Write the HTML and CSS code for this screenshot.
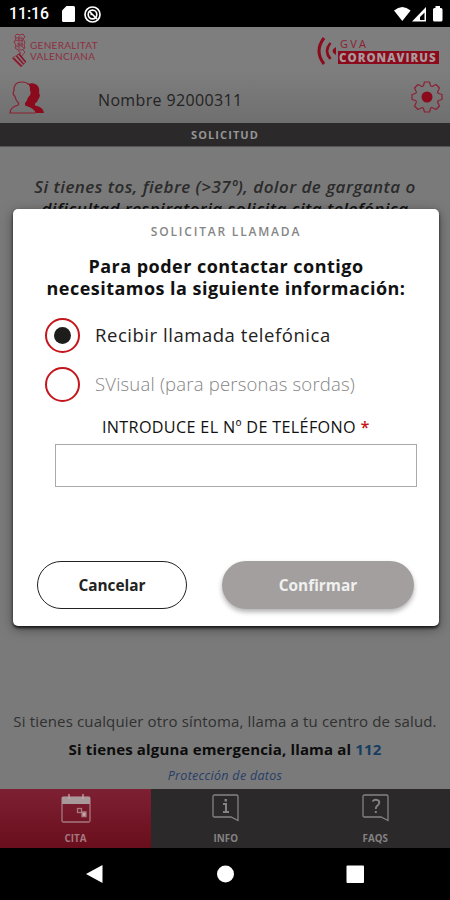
FILE: index.html
```html
<!DOCTYPE html>
<html lang="es">
<head>
    <meta charset="UTF-8">
    <meta name="viewport" content="width=device-width, initial-scale=1.0">
    <title>GVA Coronavirus</title>
    <link rel="stylesheet" href="styles.css">
</head>
<body>
    <div class="phone">
        <div class="status-bar">
            <span class="clock">11:16</span>
            <svg class="sd-card" width="13" height="16" viewBox="0 0 13 16" fill="white">
                <path d="M4.5 0H11.5Q13 0 13 1.5V14.5Q13 16 11.5 16H1.5Q0 16 0 14.5V4.5Z"/>
            </svg>
            <svg class="sync" width="17" height="17" viewBox="0 0 17 17" fill="none" stroke="white">
                <circle cx="8.5" cy="8.5" r="7.5" stroke-width="1.7"/>
                <circle cx="8.5" cy="8.5" r="4.3" stroke-width="1.7"/>
                <path d="M5 5L13 13M6.5 8.5H9" stroke-width="1.7"/>
            </svg>
            <svg class="signals" width="50" height="17" viewBox="0 0 50 17" fill="white">
                <path d="M0 4.5Q8.3 -2.5 16.6 4.5L8.3 15Z"/>
                <path fill-rule="evenodd" d="M18 15.5L32 1V15.5ZM26 14H30.5V6.5L26 11Z"/>
                <path d="M41.5 0H46V2H47Q48.5 2 48.5 3.5V14Q48.5 15.5 47 15.5H40.5Q39 15.5 39 14V3.5Q39 2 40.5 2H41.5Z"/>
            </svg>
        </div>

        <div class="header">
            <div class="brands">
                <div class="generalitat">
                    <svg width="15" height="35" viewBox="0 0 15 35" fill="none" stroke="#8d3042">
                        <path d="M3 3L5 1L8 2L11 1L13 4L11 6L13 9L12 12L13 15L10 17H6L3 15L4 12L2 9L4 6Z"/>
                        <path d="M4 5H11M3 8L7 7L11 8M5 11H11M4 14L8 12L12 15M7 3V16M10 5V14M6 18L9 20L5 22M11 17L13 19L9 24" stroke-width=".9"/>
                        <path d="M0 25L9 34L14 29L7 21Z" stroke-width=".8"/>
                        <path d="M1.5 25L9.5 33M4.5 23L11.5 31M7 21L13.5 29" stroke="#891225" stroke-width="1.5"/>
                    </svg>
                    <div class="generalitat-name">
                        <span>GENERALITAT</span>
                        <span>VALENCIANA</span>
                    </div>
                </div>
                <div class="gva">
                    <svg width="20" height="28" viewBox="0 0 20 28" fill="none" stroke="#8b0a1c">
                        <path d="M7 1Q-3 14 7 27" stroke-width="3"/>
                        <path d="M13.5 6Q6.5 14 13.5 22" stroke-width="2.6"/>
                        <path d="M19 10V18Q12 14 19 10Z" fill="#8b0a1c" stroke="none"/>
                    </svg>
                    <div class="gva-name">
                        <span class="gva-top">GVA</span>
                        <span class="gva-bottom">CORONAVIRUS</span>
                    </div>
                </div>
            </div>
            <div class="user-row">
                <svg class="users" width="36" height="33" viewBox="0 0 36 33">
                    <path fill="#8b0a1c" d="M19.5 3Q24 1 28 4Q31 7 30 12Q32 14 29.500 18Q28.500 21 26 22.500V24.500Q34.500 26 35 32H26.500Q25.500 27 16 24.500V22Q18 20 19 16.500Q23 13 21 9.500Q21.500 6 19.500 3Z"/>
                    <path fill="none" stroke="#8b2033" stroke-width="1.2" d="M9.500 24V22Q6.500 19 6 15.500Q3 13 5 9.500Q4.500 1 13 1Q17.500 1 19.800 3.500M9.500 24Q1 26 1 32H26.500"/>
                </svg>
                <span class="user-name">Nombre 92000311</span>
                <svg class="gear" width="32" height="32" viewBox="0 0 32 32">
                    <path fill="none" stroke="#8b2033" stroke-width="1.2" stroke-linejoin="round" d="M12.5 4.5L13.5 1H18.5L19.5 4.5Q20.5 6 22 5L25 3.5L28.5 7L27 10Q26 11.5 27.5 12.5L31 13.5V18.5L27.5 19.5Q26 20.5 27 22L28.5 25L25 28.5L22 27Q20.5 26 19.5 27.5L18.5 31H13.5L12.5 27.5Q11.5 26 10 27L7 28.5L3.5 25L5 22Q6 20.5 4.5 19.5L1 18.5V13.5L4.5 12.5Q6 11.5 5 10L3.5 7L7 3.5L10 5Q11.5 6 12.5 4.5Z"/>
                    <circle cx="16" cy="16" r="5.5" fill="#8b0a1c"/>
                </svg>
            </div>
        </div>

        <div class="section-bar">SOLICITUD</div>

        <div class="content">
            <p class="intro">
                <span class="intro-first">Si tienes tos, fiebre (&gt;37º), dolor de garganta o</span>
                <span class="intro-second">dificultad respiratoria solicita cita telefónica</span>
            </p>
            <div class="notes">
                <p class="symptoms">Si tienes cualquier otro síntoma, llama a tu centro de salud.</p>
                <p class="emergency">Si tienes alguna emergencia, llama al <a class="tel">112</a></p>
                <a class="privacy">Protección de datos</a>
            </div>
        </div>

        <div class="tabs">
            <div class="tab active">
                <svg width="30" height="30" viewBox="0 0 30 30" fill="none" stroke="#a4797f" stroke-width="1.3">
                    <rect x="1" y="3" width="28" height="25" rx="1.5"/>
                    <path d="M1 3H29V10H1Z" fill="#a8999a" stroke="none"/>
                    <path d="M8 0V5M22 0V5" stroke="#c5a8ab"/>
                    <rect x="16.500" y="14.500" width="4" height="4"/>
                    <path d="M21 18H25V22.5H21Z" fill="#c5a8ab"/>
                </svg>
                <span>CITA</span>
            </div>
            <div class="tab">
                <svg width="27" height="30" viewBox="0 0 27 30" fill="none" stroke="#858283" stroke-width="1.3">
                    <path d="M2.5 1H24.5Q26 1 26 2.5V26.500L19 23H2.5Q1 23 1 21.5V2.5Q1 1 2.5 1Z"/>
                    <path d="M11 10H14V18M11 18H17" stroke-width="2"/>
                    <path d="M12.5 5H15V7.5H12.5Z" fill="#858283" stroke="none"/>
                </svg>
                <span>INFO</span>
            </div>
            <div class="tab">
                <svg width="27" height="30" viewBox="0 0 27 30" fill="none" stroke="#858283" stroke-width="1.3">
                    <path d="M2.5 1H24.5Q26 1 26 2.5V26.500L19 23H2.5Q1 23 1 21.5V2.5Q1 1 2.5 1Z"/>
                    <path d="M10.5 7.5Q12 5.5 14 5.7Q17.5 6 17.3 8.7Q17 10.5 15 12Q13.8 13 13.8 15M13.8 17V19" stroke-width="1.9"/>
                </svg>
                <span>FAQS</span>
            </div>
        </div>

        <div class="nav-bar">
            <svg width="450" height="52" viewBox="0 0 450 52" fill="white">
                <path d="M86 26L102.5 17V35Z"/>
                <circle cx="225.5" cy="26" r="8.5"/>
                <rect x="346.5" y="17.5" width="17.500" height="17.500" rx="1"/>
            </svg>
        </div>

        <div class="modal">
            <div class="modal-title">SOLICITAR LLAMADA</div>
            <h2 class="question">Para poder contactar contigo<br>necesitamos la siguiente información:</h2>
            <label class="option selected"><i class="radio"></i><span>Recibir llamada telefónica</span></label>
            <label class="option"><i class="radio"></i><span>SVisual (para personas sordas)</span></label>
            <label class="phone-label" for="telefono">INTRODUCE EL Nº DE TELÉFONO <b>*</b></label>
            <input class="phone-input" id="telefono" type="tel">
            <div class="buttons">
                <button class="btn cancel">Cancelar</button>
                <button class="btn confirm">Confirmar</button>
            </div>
        </div>
    </div>
</body>
</html>
```

FILE: styles.css
```css
* {
    box-sizing: border-box;
}
body {
    margin: 0;
    background: #000;
    font-family: 'Open Sans', sans-serif;
}
p, h2 {
    margin: 0;
}
svg {
    display: block;
    flex: none;
}
.phone {
    position: relative;
    width: 450px;
    height: 900px;
    display: flex;
    flex-direction: column;
    overflow: hidden;
    background: #7a7a7a;
    white-space: nowrap;
}
.status-bar {
    height: 27px;
    display: flex;
    align-items: center;
    padding: 1px 6px 0 9px;
    background: #000;
    color: #fff;
}
.clock {
    width: 53px;
    font: 500 15.8px/26px Roboto, sans-serif;
}
.sync {
    margin-left: 9px;
}
.signals {
    margin-left: auto;
}

/* header */
.header {
    height: 96px;
    background: linear-gradient(180deg, #7e7e7e 0%, #7e7e7e 45%, #6f6f6f 100%);
}
.brands {
    height: 47px;
    display: flex;
    justify-content: space-between;
    padding: 6px 11px 0 12px;
}
.generalitat {
    display: flex;
    gap: 3px;
}
.generalitat-name {
    display: flex;
    flex-direction: column;
    padding-top: 7px;
    font-family: Lato, sans-serif;
    font-size: 10px;
    line-height: 11px;
    letter-spacing: 0.3px;
    color: #8d3042;
}
.gva {
    display: flex;
    padding-top: 4px;
    gap: 1px;
}
.gva-name {
    display: flex;
    flex-direction: column;
}
.gva-top {
    padding-left: 2px;
    font-size: 11px;
    line-height: 14px;
    letter-spacing: 2.2px;
    color: #8b2033;
}
.gva-bottom {
    width: 101px;
    height: 13px;
    padding-left: 1px;
    font-size: 11.5px;
    line-height: 13px;
    font-weight: 800;
    letter-spacing: 1px;
    background: #8b0a1c;
    color: #a9999b;
}
.user-row {
    height: 49px;
    display: flex;
    align-items: center;
    padding: 0 7px 3px 9px;
}
.user-name {
    margin-left: 53px;
    padding-top: 5px;
    font-size: 16px;
    letter-spacing: 0.35px;
    color: #232323;
}
.gear {
    margin-left: auto;
}
.section-bar {
    height: 24px;
    background: #2b2929;
    border-bottom: 1px solid #555;
    color: #969696;
    text-align: center;
    font-size: 11px;
    line-height: 24px;
    font-weight: 700;
    letter-spacing: 1.1px;
}

/* page behind the dialog */
.content {
    flex: 1;
    display: flex;
    flex-direction: column;
    justify-content: space-between;
    text-align: center;
}
.intro {
    padding-top: 29px;
    font-size: 17px;
    line-height: 22px;
    font-weight: 600;
    font-style: italic;
    letter-spacing: 0.45px;
    color: #2b2b2b;
}
.intro span {
    display: block;
}
.intro-second {
    color: #111;
}
.notes {
    letter-spacing: 0.15px;
    color: #303030;
}
.symptoms {
    font-size: 15px;
    line-height: 28px;
}
.emergency {
    font-size: 15px;
    line-height: 28px;
    font-weight: 700;
    color: #0c0c0c;
}
.tel {
    color: #163d62;
}
.privacy {
    display: block;
    font-size: 12.5px;
    line-height: 26px;
    font-style: italic;
    letter-spacing: 0.3px;
    color: #263d68;
}

/* bottom */
.tabs {
    height: 59px;
    display: flex;
    background: #2b292a;
}
.tab {
    flex: 1;
    display: flex;
    flex-direction: column;
    align-items: center;
    gap: 6px;
    padding-top: 5px;
    font-size: 9.8px;
    line-height: 17px;
    font-weight: 700;
    color: #858283;
}
.tab.active {
    flex: 0 0 151px;
    background: linear-gradient(180deg, #7e2033 0%, #690e1c 100%);
    color: #a4797f;
}
.nav-bar {
    height: 52px;
    background: #000;
}

/* dialog */
.modal {
    position: absolute;
    top: 209px;
    left: 13px;
    width: 426px;
    height: 417px;
    padding: 12px 24px 0;
    display: flex;
    flex-direction: column;
    background: #fff;
    border-radius: 5px;
    box-shadow: 0 2px 3px rgba(0,0,0,0.75), 0 3px 12px rgba(0,0,0,0.4);
}
.modal-title {
    text-align: center;
    font-size: 12px;
    line-height: 22px;
    font-weight: 600;
    letter-spacing: 1.8px;
    color: #858585;
}
.question {
    margin-top: 12px;
    text-align: center;
    font-size: 18px;
    line-height: 22px;
    font-weight: 700;
    letter-spacing: 0.47px;
    color: #111;
}
.option {
    display: flex;
    align-items: center;
    height: 49px;
    padding-left: 8px;
    gap: 15px;
    font-size: 18.5px;
    font-weight: 300;
    letter-spacing: 0.2px;
    color: #858585;
}
.option span {
    padding-bottom: 3px;
}
.question + .option {
    margin-top: 12px;
}
.option.selected {
    font-weight: 400;
    letter-spacing: 0.54px;
    color: #222;
}
.radio {
    width: 35px;
    height: 35px;
    display: flex;
    align-items: center;
    justify-content: center;
    border: 2px solid #c4161c;
    border-radius: 50%;
}
.selected .radio::before {
    content: '';
    width: 17px;
    height: 17px;
    border-radius: 50%;
    background: #1d1d1b;
}
.phone-label {
    margin: 7px 0 0 65px;
    font-size: 16.2px;
    line-height: 22px;
    letter-spacing: 0.32px;
    color: #111;
}
.phone-label b {
    font-weight: 600;
    color: #c4161c;
}
.phone-input {
    width: 362px;
    height: 43px;
    margin: 6px 0 0 18px;
    border: 1px solid #aaa;
    outline: none;
}
.buttons {
    display: flex;
    justify-content: space-between;
    margin-top: 74px;
}
.btn {
    height: 48px;
    border-radius: 24px;
    font: 700 15.4px 'Open Sans', sans-serif;
}
.cancel {
    width: 150px;
    border: 1.5px solid #222;
    background: #fff;
    color: #222;
}
.confirm {
    width: 192px;
    margin-right: 1px;
    border: 0;
    background: #a29f9e;
    color: #f0f0f0;
    box-shadow: 0 3px 5px rgba(0,0,0,0.3);
}
```
